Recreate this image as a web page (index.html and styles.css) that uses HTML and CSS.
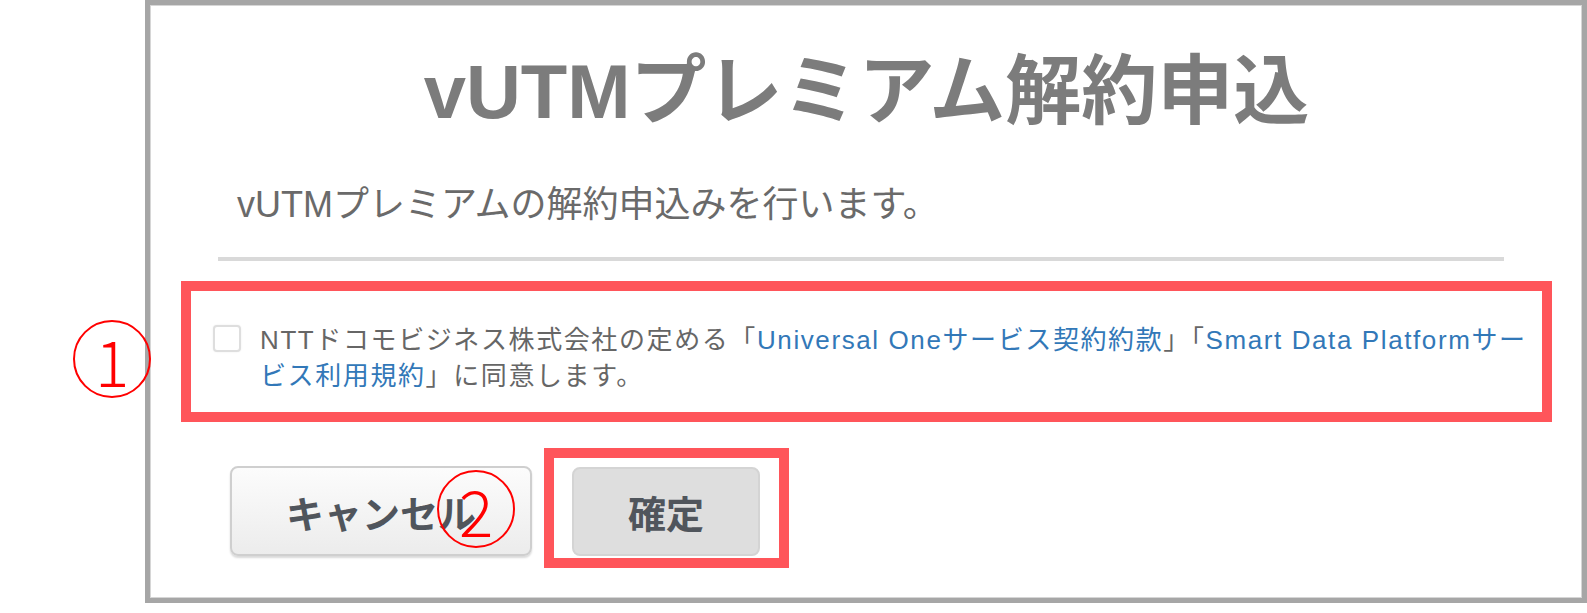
FILE: index.html
```html
<!DOCTYPE html>
<html>
	<head>
		<meta charset="utf-8" />
		<title>vUTMプレミアム解約申込</title>
		<link rel="stylesheet" href="styles.css">
	</head>
	<body>
		<!--解約ダイアログ-->
		<div class="panel">
			<h1 class="title">vUTMプレミアム解約申込</h1>
			<p class="lead">vUTMプレミアムの解約申込みを行います。</p>
			<div class="rule"></div>
			<div class="agree">
				<span class="mark mark-1">1</span>
				<input type="checkbox" class="agree-check" id="agree" />
				<label class="agree-text" for="agree">NTTドコモビジネス株式会社の定める「<a href="javascript:;">Universal Oneサービス契約約款</a>」「<a href="javascript:;">Smart Data Platformサービス利用規約</a>」に同意します。</label>
			</div>
			<div class="actions">
				<button class="btn btn-cancel">キャンセル<span class="mark mark-2">2</span></button>
				<div class="focus-box">
					<button class="btn btn-ok">確定</button>
				</div>
			</div>
		</div>
	</body>
</html>
```

FILE: styles.css
```css
body,div,p,h1,button,input{
	margin: 0;
	padding: 0;
}
body{
	background: #fff;
	font-family: "Liberation Sans", "Noto Sans CJK JP", sans-serif;
}
.panel{
	position: relative;
	box-sizing: border-box;
	width: 1442px;
	height: 603px;
	margin-left: 145px;
	padding: 0 30px 0 31px;
	border: 5px solid #a6a6a6;
	box-shadow: inset 0 0 0 1px #d6d6d6;
	background: #fff;
}
.title{
	margin-top: 42px;
	font-size: 76px;
	line-height: 90px;
	font-weight: bold;
	color: #7c7c7c;
	text-align: center;
}
.lead{
	margin: 48px 0 0 56px;
	font-size: 36px;
	line-height: 40px;
	color: #6a6a6a;
}
.rule{
	width: 1286px;
	height: 4px;
	margin: 32px 0 0 37px;
	background: #d9d9d9;
}
.agree{
	position: relative;
	display: flex;
	align-items: flex-start;
	gap: 19px;
	margin-top: 20px;
	padding: 31px 2px 18px 22px;
	border: 10px solid #ff555a;
}
.agree-check{
	appearance: none;
	flex: none;
	width: 28px;
	height: 27px;
	margin-top: 3px;
	box-sizing: border-box;
	border: 2px solid #dedede;
	border-radius: 4px;
	box-shadow: 0 0 2px rgba(0,0,0,0.08);
	background: #fff;
}
.agree-text{
	font-size: 26px;
	line-height: 36px;
	letter-spacing: 1.6px;
	color: #666;
}
.agree-text a{
	color: #3278b8;
	text-decoration: none;
}
.actions{
	display: flex;
	align-items: flex-start;
	gap: 12px;
	margin-top: 26px;
	padding-left: 49px;
}
.btn{
	position: relative;
	box-sizing: border-box;
	height: 90px;
	font-family: "Liberation Sans", "Noto Sans CJK JP", sans-serif;
	font-size: 38px;
	font-weight: bold;
	color: #50555c;
	border-radius: 8px;
}
.btn-cancel{
	width: 302px;
	margin-top: 18px;
	border: 2px solid #cfcfcf;
	background: linear-gradient(#fcfcfc, #ececec);
	box-shadow: 0 2px 2px rgba(0,0,0,0.15);
}
.focus-box{
	padding: 9px 19px 2px 18px;
	border: 10px solid #ff555a;
}
.btn-ok{
	width: 188px;
	height: 89px;
	border: 2px solid #d4d4d4;
	background: #dedede;
}
/* 注釈の丸数字 */
.mark{
	position: absolute;
	display: flex;
	align-items: center;
	justify-content: center;
	box-sizing: border-box;
	width: 78px;
	height: 78px;
	border: 2px solid #f00;
	border-radius: 50%;
	font-family: "Noto Sans CJK JP", sans-serif;
	font-size: 64px;
	font-weight: 300;
	line-height: 1;
	color: #f00;
}
.mark-1{
	left: -118px;
	top: 29px;
}
.mark-2{
	left: 205px;
	top: 2px;
}
```
